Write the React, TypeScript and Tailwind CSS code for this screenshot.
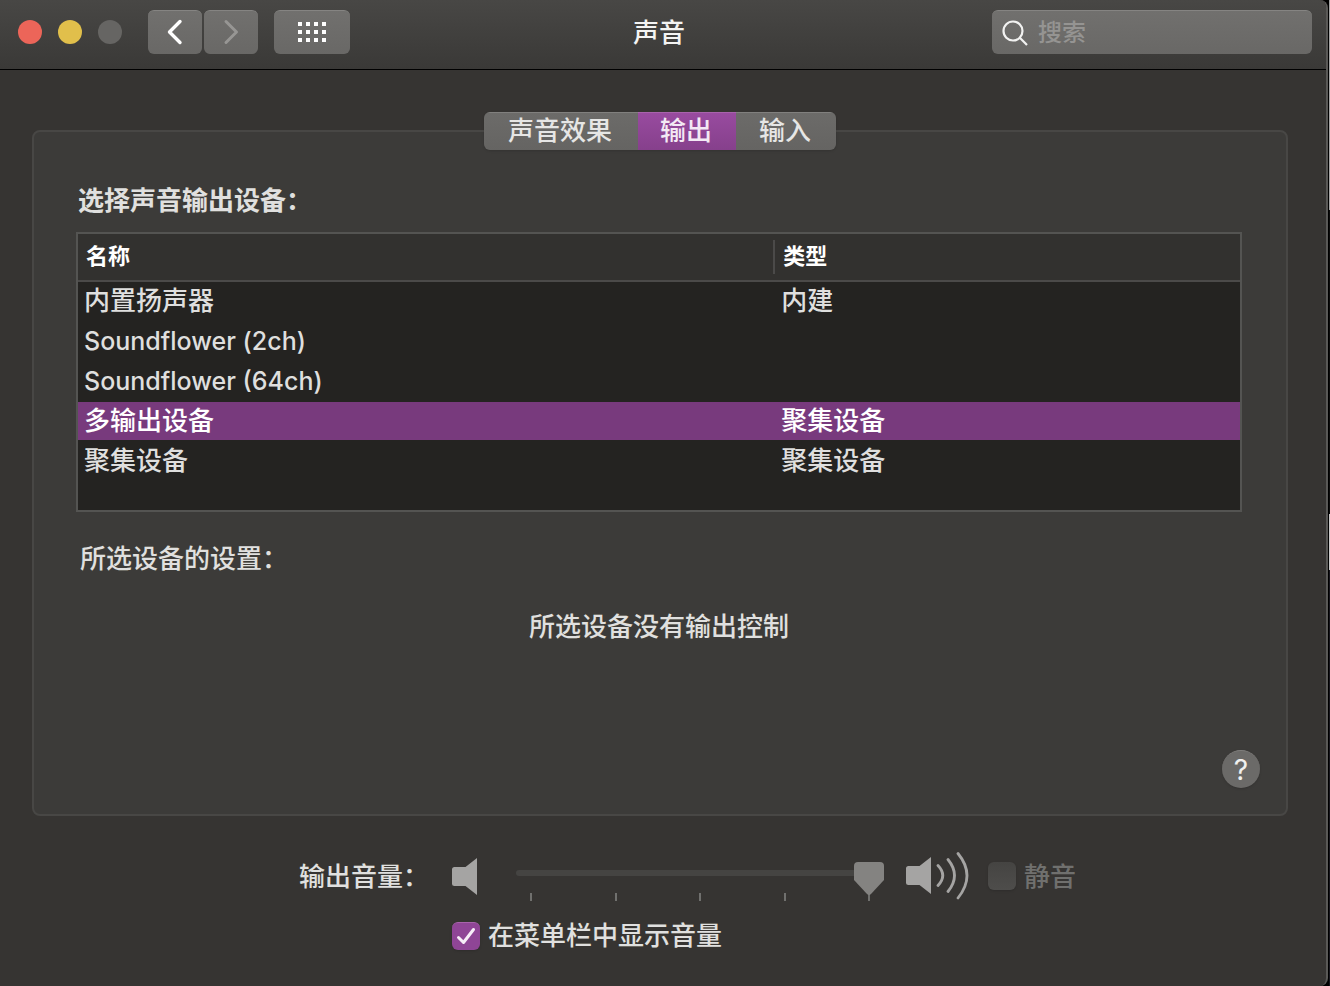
import { useState } from "react";

const devices = [
  { name: "内置扬声器", type: "内建", size: "text-[26px]" },
  { name: "Soundflower (2ch)", type: "", size: "text-[25px]" },
  { name: "Soundflower (64ch)", type: "", size: "text-[25px]" },
  { name: "多输出设备", type: "聚集设备", size: "text-[26px]" },
  { name: "聚集设备", type: "聚集设备", size: "text-[26px]" },
];

const tabs = [
  { label: "声音效果", width: "w-[154px]" },
  { label: "输出", width: "w-[98px]" },
  { label: "输入", width: "w-[100px]" },
];

const ticks = [0, 1, 2, 3, 4];
const dots = Array.from({ length: 12 }, (_, i) => i);

const toolButton =
  "flex h-11 items-center justify-center rounded-md border-t border-[#858482] bg-linear-to-b from-[#71706e] to-[#696866] pb-0.5";

function TitleBar() {
  return (
    <header className="flex h-[70px] items-start border-b border-black bg-linear-to-b from-[#484745] to-[#3a3937] pr-3.5 pl-[18px] pt-2.5">
      <div className="flex flex-1 items-center">
        <div className="flex gap-4">
          <button aria-label="关闭" className="size-6 rounded-full bg-[#ec6559]" />
          <button aria-label="最小化" className="size-6 rounded-full bg-[#e1bf4b]" />
          <button aria-label="缩放" disabled className="size-6 rounded-full bg-[#666563]" />
        </div>
        <nav className="ml-[26px] flex gap-0.5">
          <button aria-label="后退" className={`${toolButton} w-[54px]`}>
            <svg width="16" height="26" viewBox="0 0 16 26" fill="none" stroke="#fff" strokeWidth="3.4" strokeLinecap="round" strokeLinejoin="round">
              <path d="M13 2.5 2.5 13 13 23.5" />
            </svg>
          </button>
          <button aria-label="前进" disabled className={`${toolButton} w-[54px]`}>
            <svg width="16" height="26" viewBox="0 0 16 26" fill="none" stroke="#979694" strokeWidth="3" strokeLinecap="round" strokeLinejoin="round">
              <path d="M3 2.5 13.5 13 3 23.5" />
            </svg>
          </button>
        </nav>
        <button aria-label="全部显示" className={`${toolButton} ml-4 w-[76px]`}>
          <svg width="28" height="20" viewBox="0 0 28 20" fill="#fff">
            {dots.map((i) => (
              <rect key={i} x={(i % 4) * 8} y={Math.floor(i / 4) * 8} width="4" height="4" />
            ))}
          </svg>
        </button>
      </div>
      <h1 className="mr-3 text-[26px] leading-[46px] text-[#f4f4f3]">声音</h1>
      <div className="flex flex-1 justify-end">
        <label className="flex h-11 w-80 shrink-0 items-center gap-2.5 rounded-md border-t border-[#858482] bg-linear-to-b from-[#71706e] to-[#696866] pl-2.5">
          <svg width="26" height="26" viewBox="0 0 26 26" fill="none" stroke="#f2f2f1" strokeWidth="2.2">
            <circle cx="11" cy="11" r="9.5" />
            <path d="m17.8 17.8 7.2 7.2" />
          </svg>
          <input
            type="search"
            aria-label="搜索"
            placeholder="搜索"
            className="min-w-0 flex-1 bg-transparent text-2xl leading-10 text-white outline-none placeholder:text-[#959492]"
          />
        </label>
      </div>
    </header>
  );
}

function DeviceTable() {
  const [selected, setSelected] = useState(3);
  return (
    <div className="mt-2.5 h-[280px] border-2 border-[#545452] bg-[#242321]">
      <table className="w-full table-fixed border-separate border-spacing-0">
        <thead>
          <tr className="bg-[#32312f] text-left text-[22px] leading-8 text-white">
            <th className="h-12 w-[60%] border-b-2 border-[#4b4a49] p-0 font-bold">
              <div className="h-[34px] border-r-2 border-[#4b4a49] pl-2">名称</div>
            </th>
            <th className="h-12 border-b-2 border-[#4b4a49] p-0 font-bold">
              <div className="h-[34px] pl-2">类型</div>
            </th>
          </tr>
        </thead>
        <tbody>
          {devices.map((device, i) => (
            <tr
              key={i}
              onClick={() => setSelected(i)}
              aria-selected={selected === i}
              className={`${device.size} leading-9 ${selected === i ? "bg-[#783a7d] text-white" : "text-[#dfdfde]"}`}
            >
              <td className="h-10 border-b-2 border-[#242321] p-0 pl-1.5">{device.name}</td>
              <td className="h-10 border-b-2 border-[#242321] p-0 pl-1.5">{device.type}</td>
            </tr>
          ))}
        </tbody>
      </table>
    </div>
  );
}

function OutputPanel() {
  const [tab, setTab] = useState(1);
  return (
    <main className="mr-[38px] ml-8 mt-[42px] flex flex-col">
      <div role="tablist" className="z-10 -mb-5 flex self-center overflow-hidden rounded-md shadow-sm">
        {tabs.map((t, i) => (
          <button
            key={t.label}
            role="tab"
            aria-selected={tab === i}
            onClick={() => setTab(i)}
            className={`${t.width} h-[38px] border-t pr-0.5 pb-0.5 leading-8 ${
              tab === i
                ? "border-[#a863ac] bg-linear-to-b from-[#984b9f] to-[#86408c] text-[#f3e9f4]"
                : "border-[#81807e] bg-linear-to-b from-[#6c6b69] to-[#656462] text-[#e6e6e5]"
            }`}
          >
            {t.label}
          </button>
        ))}
      </div>
      <section className="flex h-[686px] flex-col rounded-lg border-2 border-[#484745] bg-[#3c3b39] pr-11 pl-[42px] pt-12">
        <h2 className="pl-0.5 leading-[42px] font-bold">选择声音输出设备：</h2>
        <DeviceTable />
        <p className="mt-7 pl-1 leading-[38px]">所选设备的设置：</p>
        <p className="mt-[30px] text-center leading-[38px]">所选设备没有输出控制</p>
        <button
          aria-label="帮助"
          className="mt-auto -mr-[18px] mb-[26px] flex size-[38px] items-center justify-center self-end rounded-full border-t border-[#807f7d] bg-[#6b6a68] text-[28px] leading-9 font-normal text-[#f0f0ef] shadow-sm"
        >
          ?
        </button>
      </section>
    </main>
  );
}

function SpeakerBody() {
  return <path d="M2.500 9H13.500L25 0V37L13.500 28H2.500Q0 28 0 25.500V11.500Q0 9 2.500 9Z" fill="#a5a4a3" />;
}

function VolumeSlider() {
  const [volume, setVolume] = useState(100);
  return (
    <div className="relative ml-[38px] h-12 w-[368px]">
      <div className="mt-[18px] mr-2 h-1.5 rounded-full bg-[#454442]" />
      <div className="mt-[17px] flex justify-between px-3.5">
        {ticks.map((t) => (
          <span key={t} className="h-2 w-0.5 bg-[#70706e]" />
        ))}
      </div>
      <input
        type="range"
        aria-label="输出音量"
        min={0}
        max={100}
        value={volume}
        onChange={(e) => setVolume(Number(e.target.value))}
        className="absolute inset-0 w-full cursor-pointer opacity-0"
      />
      <svg
        className="pointer-events-none absolute top-2.5 -ml-[2px]"
        style={{ left: `${volume * 3.4}px` }}
        width="30"
        height="40"
        viewBox="0 0 30 40"
      >
        <path d="M4 0H26Q30 0 30 4V18L17 32Q15 34 13 32L0 18V4Q0 0 4 0Z" fill="#848381" />
      </svg>
    </div>
  );
}

function VolumeControls() {
  const [shown, setShown] = useState(true);
  return (
    <footer className="grid grid-cols-[452px_1fr] pt-9">
      <div className="pl-[299px] leading-[50px]">输出音量：</div>
      <div className="flex h-12 items-center">
        <svg width="26" height="37" viewBox="0 0 26 37">
          <SpeakerBody />
        </svg>
        <VolumeSlider />
        <svg className="ml-[22px]" width="64" height="48" viewBox="0 0 64 48">
          <g transform="translate(0 5)">
            <SpeakerBody />
          </g>
          <path
            d="M32 13.500Q41.500 23.500 32 33.500M42 7.500Q55 23.500 42 39.500M52 1.500Q70 23.500 52 46"
            fill="none"
            stroke="#a5a4a3"
            strokeWidth="2.800"
            strokeLinecap="round"
          />
        </svg>
        <label className="ml-[18px] flex items-center gap-2 text-[#70706e]">
          <input
            type="checkbox"
            disabled
            className="size-7 appearance-none rounded-md bg-linear-to-b from-[#454442] to-[#4e4d4b] shadow-sm"
          />
          静音
        </label>
      </div>
      <label className="col-start-2 mt-2.5 flex items-center gap-2 justify-self-start leading-[48px]">
        <span className="relative flex">
          <input
            type="checkbox"
            checked={shown}
            onChange={(e) => setShown(e.target.checked)}
            className="size-7 appearance-none rounded-md border-t border-[#6a6967] bg-[#5a5957] shadow-sm checked:border-[#a863ac] checked:bg-[#8f4596]"
          />
          {shown && (
            <svg
              className="pointer-events-none absolute inset-0"
              width="28"
              height="28"
              viewBox="0 0 28 28"
              fill="none"
              stroke="#f7edf8"
              strokeWidth="3"
              strokeLinecap="round"
              strokeLinejoin="round"
            >
              <path d="M6.500 15.500 11.500 20.500 21.500 7.500" />
            </svg>
          )}
        </span>
        在菜单栏中显示音量
      </label>
    </footer>
  );
}

export default function App() {
  return (
    <div className="min-h-screen bg-[linear-gradient(#a3a3a3_0_210px,#0c0c0c_210px_514px,#c9c9c9_514px_570px,#16151c_570px)] pr-px font-[Inter,'Noto_Sans_CJK_SC',sans-serif] text-[26px] font-medium text-[#e0e0df]">
      <div className="min-h-screen bg-black pr-px">
        <div className="min-h-screen overflow-hidden rounded-r-lg border-r-2 border-[#5a5957] bg-[#363432]">
          <TitleBar />
          <OutputPanel />
          <VolumeControls />
        </div>
      </div>
    </div>
  );
}
